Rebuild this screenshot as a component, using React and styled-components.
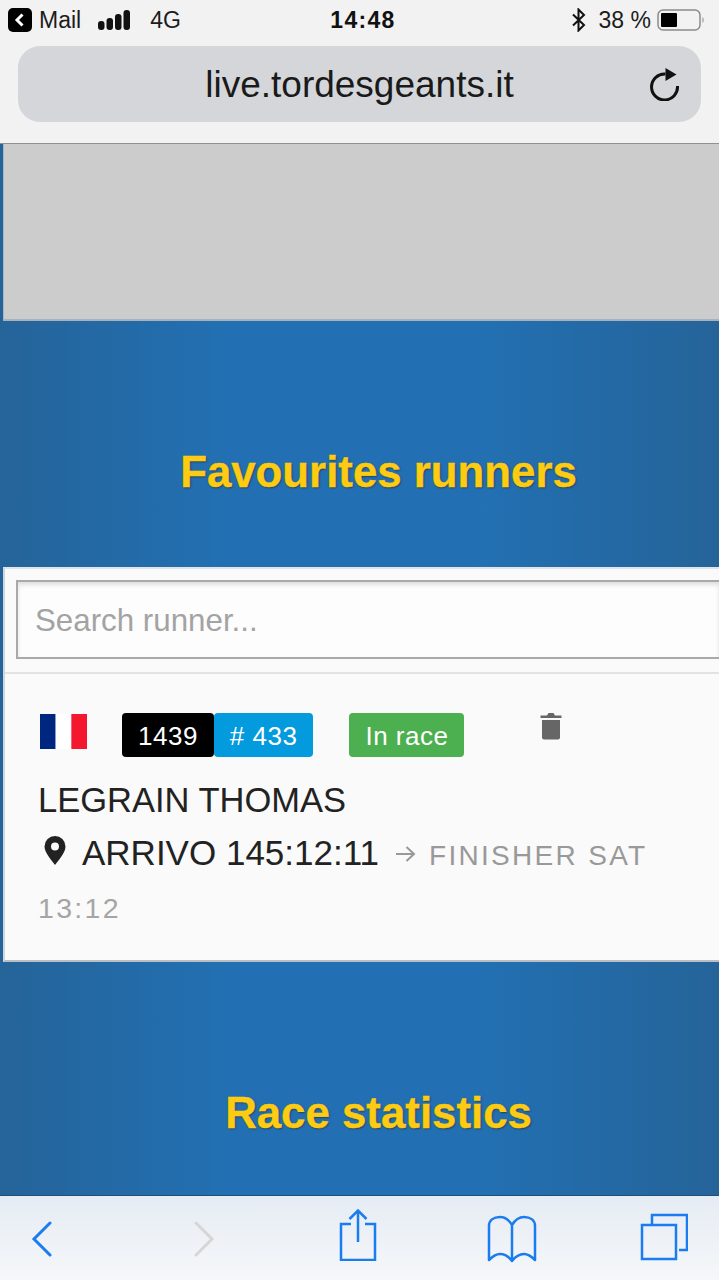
import React from 'react';
import styled, { createGlobalStyle } from 'styled-components';

const GlobalStyle = createGlobalStyle`
  html, body {
    margin: 0;
    padding: 0;
    background: #2268a8;
  }
  body {
    font-family: "Liberation Sans", Arial, sans-serif;
  }
`;

const Screen = styled.div`
  width: 719px;
  height: 1280px;
  display: flex;
  flex-direction: column;
  overflow: hidden;
`;

const BrowserBar = styled.header`
  height: 144px;
  flex: none;
  box-sizing: border-box;
  background: #f2f2f2;
  border-bottom: 1px solid #8f9092;
`;

const StatusBar = styled.div`
  height: 46px;
  box-sizing: border-box;
  padding: 0 12px 6px 8px;
  display: flex;
  align-items: center;
  justify-content: space-between;
  font-size: 23px;
  color: #1c1c1e;
`;

const StatusGroup = styled.div`
  display: flex;
  align-items: center;
  width: 230px;
  justify-content: ${(p) => (p.$end ? 'flex-end' : 'flex-start')};
`;

const Clock = styled.div`
  margin-left: 11px;
  font-weight: 700;
  font-size: 23px;
  letter-spacing: 1.300px;
  color: #111;
`;

const StatusText = styled.span`
  margin-left: ${(p) => p.$gap || 0}px;
`;

const StatusIcon = styled.svg`
  flex: none;
  margin-left: ${(p) => p.$gap || 0}px;
`;

const AddressBar = styled.div`
  height: 76px;
  margin: 0 18px;
  border-radius: 22px;
  background: #d5d6da;
  display: flex;
  align-items: center;
  position: relative;
  justify-content: center;
  font-size: 37px;
  color: #1a1a1a;
  padding-top: 2px;
  box-sizing: border-box;
`;

const Reload = styled.svg`
  position: absolute;
  right: 19px;
  top: 21px;
`;

const Content = styled.main`
  flex: 1;
  min-height: 0;
  overflow: hidden;
  background: linear-gradient(90deg, #256499 0%, #2270b3 32%, #2270b3 66%, #256499 100%);
`;

const GreyPanel = styled.div`
  height: 177px;
  margin-left: 3px;
  box-sizing: border-box;
  background: #cccccc;
  border-left: 1px solid #a9b4bf;
  border-bottom: 2px solid #a8b2bc;
`;

const SectionTitle = styled.h2`
  margin: 0;
  height: ${(p) => p.$height}px;
  padding: ${(p) => p.$top}px 0 0 38px;
  box-sizing: border-box;
  text-align: center;
  font-size: 43.800px;
  line-height: 48px;
  font-weight: 700;
  color: #fdcb12;
  -webkit-text-stroke: 0.4px #fdcb12;
  text-shadow: 1px 1px 2px rgba(40, 40, 40, 0.7);
`;

const Card = styled.section`
  height: 395px;
  margin-left: 3px;
  box-sizing: border-box;
  background: #fafafa;
  border-left: 2px solid #cfd6dc;
  border-top: 2px solid #dfe5ea;
  border-bottom: 2px solid #b9bfc4;
`;

const SearchRow = styled.div`
  height: 105px;
  box-sizing: border-box;
  padding: 11px 0 0 11px;
  border-bottom: 2px solid #e2e2e2;
`;

const SearchInput = styled.div`
  height: 79px;
  box-sizing: border-box;
  border: 2.500px solid #a9a9a9;
  border-right: none;
  box-shadow: inset 0 3px 4px rgba(0, 0, 0, 0.12);
  padding: 2px 0 0 17px;
  display: flex;
  align-items: center;
  font-size: 31.300px;
  color: #a3a3a3;
  background: #fdfdfd;
`;

const Runner = styled.div`
  padding: 39px 0 0 33px;
`;

const BadgeRow = styled.div`
  display: flex;
  align-items: flex-start;
  height: 44px;
`;

const Flag = styled.svg`
  margin: 1px 35px 0 2px;
`;

const Badge = styled.span`
  height: 44px;
  box-sizing: border-box;
  border-radius: 4px;
  padding: 3px 16px 0;
  display: inline-flex;
  align-items: center;
  font-size: 26px;
  letter-spacing: 0.500px;
  color: #fff;
  background: ${(p) => p.$bg};
  margin-left: ${(p) => p.$gap || 0}px;
`;

const Trash = styled.svg`
  margin: 0 0 0 76px;
`;

const RunnerName = styled.div`
  margin-top: 22px;
  font-size: 34.500px;
  line-height: 42px;
  color: #222;
`;

const Place = styled.div`
  margin-top: 11px;
  display: flex;
  flex-wrap: wrap;
  align-items: baseline;
  font-size: 35px;
  line-height: 42px;
  color: #222;
`;

const Pin = styled.svg`
  margin: 4px 16px 0 6px;
  align-self: flex-start;
`;

const Finish = styled.span`
  margin-left: 17px;
  font-size: 28px;
  letter-spacing: 2.300px;
  color: #999;
`;

const FinishArrow = styled.svg`
  margin: 0 13px 3px 0;
`;

const FinishTime = styled.div`
  margin-top: 14px;
  font-size: 28.500px;
  line-height: 34px;
  letter-spacing: 2.300px;
  color: #a5a5a5;
`;

const Toolbar = styled.nav`
  height: 85px;
  flex: none;
  box-sizing: border-box;
  border-top: 1px solid #1f4f78;
  background: linear-gradient(#e6ecf4, #f5f7f9);
  display: flex;
  align-items: flex-start;
  padding-left: 31px;
`;

const ToolIcon = styled.svg`
  flex: none;
  margin: ${(p) => p.$top}px 0 0 ${(p) => p.$left || 0}px;
`;

const App = () => {
  return (
    <Screen>
      <GlobalStyle />
      <BrowserBar>
        <StatusBar>
          <StatusGroup>
            <StatusIcon width="24" height="24" viewBox="0 0 24 24">
              <rect width="24" height="24" rx="5" fill="#000" />
              <path d="M14.500 6.500 9 12l5.500 5.500" fill="none" stroke="#fff" strokeWidth="3" />
            </StatusIcon>
            <StatusText $gap={7}>Mail</StatusText>
            <StatusIcon $gap={17} width="32" height="20" viewBox="0 0 32 20">
              <rect x="0" y="11" width="6.500" height="9" rx="3" fill="#111" />
              <rect x="8.500" y="8" width="6.500" height="12" rx="3" fill="#111" />
              <rect x="17" y="4" width="6.500" height="16" rx="3" fill="#111" />
              <rect x="25.500" y="0" width="6.500" height="20" rx="3" fill="#111" />
            </StatusIcon>
            <StatusText $gap={20}>4G</StatusText>
          </StatusGroup>
          <Clock>14:48</Clock>
          <StatusGroup $end>
            <StatusIcon width="16" height="24" viewBox="0 0 16 24">
              <path d="M2 6.500 13 17l-5.500 5.500v-21L13 7 2 17.500" fill="none" stroke="#111" strokeWidth="2" />
            </StatusIcon>
            <StatusText $gap={12}>38 %</StatusText>
            <StatusIcon $gap={6} width="50" height="24" viewBox="0 0 50 24">
              <rect x="1" y="2" width="42" height="20" rx="5" fill="none" stroke="#8c8c8c" strokeWidth="1.500" />
              <rect x="4" y="5" width="16" height="14" rx="1" fill="#000" />
              <path d="M45.500 9c1.400.6 1.400 5.400 0 6z" fill="#8c8c8c" />
            </StatusIcon>
          </StatusGroup>
        </StatusBar>
        <AddressBar>
          live.tordesgeants.it
          <Reload width="32" height="34" viewBox="0 0 32 34">
            <path d="M27.500 19A13 13 0 1 1 15.500 7" fill="none" stroke="#111" strokeWidth="3" />
            <path d="M15.500 1l11 6.500-11 6.500z" fill="#111" />
          </Reload>
        </AddressBar>
      </BrowserBar>
      <Content>
        <GreyPanel />
        <SectionTitle $height={246} $top={127}>Favourites runners</SectionTitle>
        <Card>
          <SearchRow>
            <SearchInput>Search runner...</SearchInput>
          </SearchRow>
          <Runner>
            <BadgeRow>
              <Flag width="47" height="35" viewBox="0 0 3 2" preserveAspectRatio="none">
                <rect width="1" height="2" fill="#002780" />
                <rect x="1" width="1" height="2" fill="#fff" />
                <rect x="2" width="1" height="2" fill="#f31830" />
              </Flag>
              <Badge $bg="#000">1439</Badge>
              <Badge $bg="#039bdd">#&nbsp;433</Badge>
              <Badge $bg="#4caf50" $gap={36}>In race</Badge>
              <Trash width="22" height="27" viewBox="0 0 22 27">
                <path d="M7 2.500 8.500 0h5L15 2.500h6.500v2.500H.5V2.500z" fill="#666" />
                <path d="M2 7h18v17.500a2 2 0 0 1-2 2H4a2 2 0 0 1-2-2z" fill="#666" />
              </Trash>
            </BadgeRow>
            <RunnerName>LEGRAIN THOMAS</RunnerName>
            <Place>
              <Pin width="22" height="29" viewBox="0 0 22 29">
                <path
                  fillRule="evenodd"
                  d="M11 0a10.500 10.500 0 0 1 10.500 10.500C21.500 17 14 24.500 11 29 8 24.500.5 17 .5 10.500A10.500 10.500 0 0 1 11 0zm0 6.500a4 4 0 1 0 0 8 4 4 0 0 0 0-8z"
                  fill="#222"
                />
              </Pin>
              ARRIVO 145:12:11
              <Finish>
                <FinishArrow width="20" height="16" viewBox="0 0 20 16">
                  <path d="M0 8h18M10.500 1l7.500 7-7.500 7" fill="none" stroke="#999" strokeWidth="2" />
                </FinishArrow>
                FINISHER SAT
              </Finish>
            </Place>
            <FinishTime>13:12</FinishTime>
          </Runner>
        </Card>
        <SectionTitle $height={234} $top={127}>Race statistics</SectionTitle>
      </Content>
      <Toolbar>
        <ToolIcon $top={25} width="22" height="36" viewBox="0 0 22 36">
          <path d="M19 2 3 18l16 16" fill="none" stroke="#1a7cee" strokeWidth="3" strokeLinecap="round" />
        </ToolIcon>
        <ToolIcon $top={25} $left={140} width="22" height="36" viewBox="0 0 22 36">
          <path d="M3 2l16 16L3 34" fill="none" stroke="#d6d6d6" strokeWidth="3" strokeLinecap="round" />
        </ToolIcon>
        <ToolIcon $top={13} $left={124} width="38" height="52" viewBox="0 0 38 52">
          <path d="M12 15H2v36h34V15H26" fill="none" stroke="#1a7cee" strokeWidth="2.500" />
          <path d="M19 33V2M10.500 10l8.500-8.500 8.500 8.500" fill="none" stroke="#1a7cee" strokeWidth="2.500" />
        </ToolIcon>
        <ToolIcon $top={19} $left={110} width="50" height="48" viewBox="0 0 50 48">
          <path
            d="M25 10C22 5 18 2 13 2 7 2 2 5 2 11V45C6 41 9 39 13 39 18 39 22 42 25 46 28 42 32 39 37 39 41 39 44 41 48 45V11C48 5 43 2 37 2 32 2 28 5 25 10ZM25 10V46"
            fill="none"
            stroke="#1a7cee"
            strokeWidth="2.500"
            strokeLinejoin="round"
          />
        </ToolIcon>
        <ToolIcon $top={17} $left={103} width="48" height="48" viewBox="0 0 48 48">
          <path d="M12 11V2h35v35h-8" fill="none" stroke="#1a7cee" strokeWidth="2.500" />
          <rect x="2" y="12" width="34" height="34" fill="none" stroke="#1a7cee" strokeWidth="2.500" />
        </ToolIcon>
      </Toolbar>
    </Screen>
  );
};

export default App;
